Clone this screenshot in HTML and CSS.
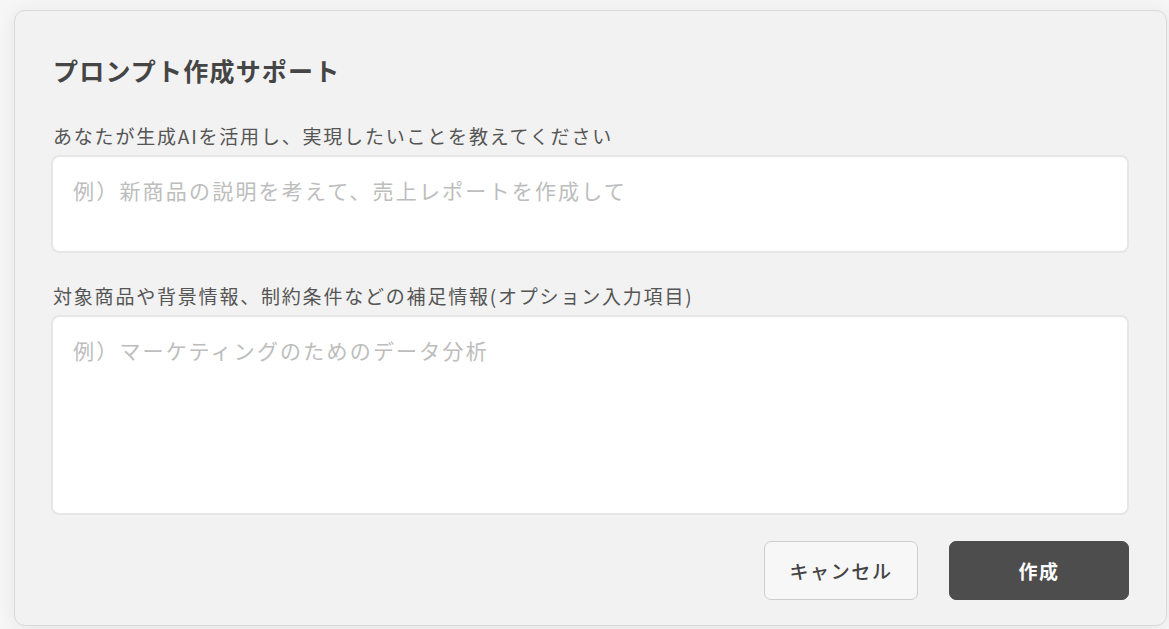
FILE: index.html
```html
<!DOCTYPE html>
<html lang="ja">
<head>
<meta charset="utf-8">
<title>プロンプト作成サポート</title>
<link rel="stylesheet" href="styles.css">
</head>
<body>
<div class="modal">
  <h1 class="title">プロンプト作成サポート</h1>
  <label class="label label-first" for="goal">あなたが生成AIを活用し、実現したいことを教えてください</label>
  <textarea id="goal" class="field field-short" placeholder="例）新商品の説明を考えて、売上レポートを作成して"></textarea>
  <label class="label label-second" for="extra">対象商品や背景情報、制約条件などの補足情報(オプション入力項目)</label>
  <textarea id="extra" class="field field-tall" placeholder="例）マーケティングのためのデータ分析"></textarea>
  <div class="actions">
    <button class="btn btn-cancel" type="button">キャンセル</button>
    <button class="btn btn-create" type="button">作成</button>
  </div>
</div>
</body>
</html>
```

FILE: styles.css
```css
html, body {
  margin: 0;
  padding: 0;
}
body {
  background: #f6f6f6;
  font-family: "Noto Sans CJK JP", "Noto Sans", sans-serif;
  height: 629px;
  overflow: hidden;
}
.modal {
  box-sizing: border-box;
  width: 1153px;
  height: 616px;
  margin: 10px 0 0 14px;
  background: #f2f2f2;
  border: 1px solid #d9d9de;
  border-radius: 11px;
  box-shadow: 0 2px 18px rgba(0, 0, 0, 0.07);
  padding: 41px 37px 24px 36px;
  display: flex;
  flex-direction: column;
}
.title {
  margin: 0;
  font-size: 25px;
  line-height: 36px;
  font-weight: 700;
  color: #454545;
  letter-spacing: 1.2px;
  padding-left: 2px;
}
.label {
  display: block;
  font-size: 19px;
  line-height: 25px;
  color: #555555;
  letter-spacing: 1.8px;
  padding-left: 2px;
  margin-bottom: 7px;
}
.label-first {
  margin-top: 35px;
}
.label-second {
  margin-top: 30px;
}
.field {
  display: block;
  box-sizing: border-box;
  width: 100%;
  margin: 0;
  border: 2px solid #e6e6e6;
  border-radius: 8px;
  background: #ffffff;
  resize: none;
  outline: none;
  font-family: "Noto Sans CJK JP", "Noto Sans", sans-serif;
  font-size: 21px;
  line-height: 30px;
  letter-spacing: 2.2px;
  color: #444;
  padding: 18px 20px;
}
.field::placeholder {
  color: #bdbdbd;
}
.field-short {
  height: 98px;
}
.field-tall {
  height: 200px;
}
.actions {
  margin-top: 26px;
  display: flex;
  justify-content: flex-end;
  gap: 31px;
}
.btn {
  box-sizing: border-box;
  height: 59px;
  border-radius: 7px;
  font-family: "Noto Sans CJK JP", "Noto Sans", sans-serif;
  font-size: 19px;
  letter-spacing: 1.6px;
  cursor: pointer;
}
.btn-cancel {
  width: 154px;
  background: #f7f7f7;
  border: 1px solid #cdcdcd;
  color: #444;
  font-weight: 500;
}
.btn-create {
  width: 180px;
  background: #4d4d4d;
  border: 1px solid #4d4d4d;
  color: #ffffff;
  font-weight: 700;
}
```
